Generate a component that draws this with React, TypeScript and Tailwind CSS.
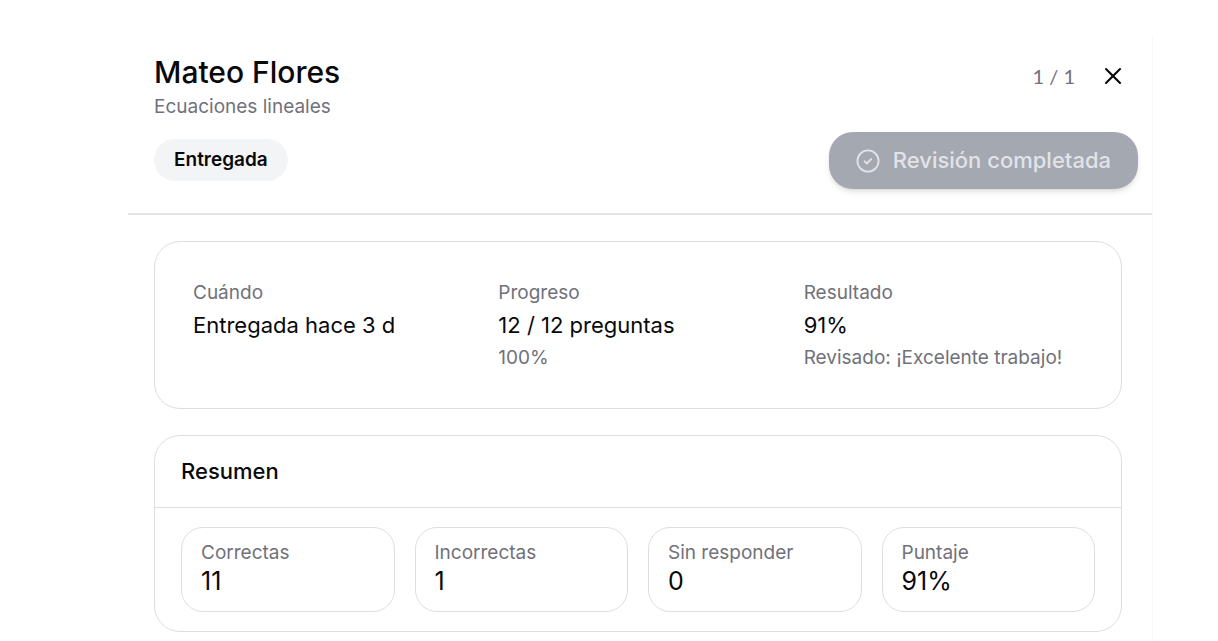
import React from "react";
import { X } from "lucide-react";

const details = [
  { label: "Cuándo", value: "Entregada hace 3 d", note: "" },
  { label: "Progreso", value: "12 / 12 preguntas", note: "100%" },
  { label: "Resultado", value: "91%", note: "Revisado: ¡Excelente trabajo!" },
];

const totals = [
  { label: "Correctas", value: "11" },
  { label: "Incorrectas", value: "1" },
  { label: "Sin responder", value: "0" },
  { label: "Puntaje", value: "91%" },
];

function DoneIcon() {
  return (
    <svg viewBox="0 0 24 24" className="size-6" fill="none" stroke="currentColor" strokeWidth="2" strokeLinecap="round" strokeLinejoin="round" aria-hidden="true">
      <circle cx="12" cy="12" r="10.6" strokeWidth="1.8" />
      <path d="m8.6 12.4 2.2 2.1 4.4-4.4" />
    </svg>
  );
}

export default function App() {
  return (
    <main className="min-h-screen bg-white pt-9 pr-[65px] pl-32 font-['Inter',sans-serif] text-[#09090b]">
      <div className="min-h-[605px] border-r border-[#f8f8f9] pb-2">
        <header className="border-b-2 border-[#e4e4e7] pr-3.5 pb-6 pl-[26px]">
          <div className="flex items-start justify-between pt-4">
            <div>
              <h1 className="text-[30px] leading-10 font-medium">Mateo Flores</h1>
              <p className="text-[19px] leading-[30px] text-[#71717a]">Ecuaciones lineales</p>
            </div>
            <div className="flex items-center gap-6 pt-2 pr-[11px]">
              <span className="font-['Lato',sans-serif] text-[20px] leading-8 text-[#71717a] tabular-nums">1 / 1</span>
              <button type="button" aria-label="Cerrar" className="flex size-7 items-center justify-center">
                <X className="size-7" strokeWidth={1.8} />
              </button>
            </div>
          </div>
          <div className="flex items-start justify-between pt-2.5">
            <span className="mt-[7px] rounded-full bg-[#f3f4f6] px-5 py-2 text-[19px] leading-[26px] font-semibold">Entregada</span>
            <button type="button" disabled className="flex h-[57px] items-center gap-[13px] rounded-3xl bg-[#a4a8b0] px-[27px] text-[22px] font-medium text-[#e1e3e8] shadow-md">
              <DoneIcon />
              Revisión completada
            </button>
          </div>
        </header>

        <div className="flex flex-col gap-[26px] pt-[26px] pr-[30px] pl-[26px]">
          <section className="grid grid-cols-3 gap-7 rounded-[26px] border border-[#dedee1] pt-[38px] pr-10 pb-[37px] pl-[38px]">
            {details.map((item) => (
              <div key={item.label} className="flex flex-col gap-[3px] whitespace-nowrap">
                <p className="text-[19px] leading-[26px] text-[#71717a]">{item.label}</p>
                <p className="text-[22px] leading-[33px]">{item.value}</p>
                {item.note && <p className="text-[19px] leading-[26px] text-[#71717a]">{item.note}</p>}
              </div>
            ))}
          </section>

          <section className="rounded-[26px] border border-[#dedee1]">
            <h2 className="border-b border-[#dedee1] px-[26px] py-[19px] text-[22px] leading-[33px] font-medium">Resumen</h2>
            <div className="grid grid-cols-4 gap-5 px-[26px] py-[19px]">
              {totals.map((item) => (
                <div key={item.label} className="rounded-[22px] border border-[#dedee1] px-[19px] pt-3 pb-[15px]">
                  <p className="text-[19px] leading-[26px] text-[#71717a]">{item.label}</p>
                  <p className="text-[25px] leading-[30px]">{item.value}</p>
                </div>
              ))}
            </div>
          </section>
        </div>
      </div>
    </main>
  );
}
